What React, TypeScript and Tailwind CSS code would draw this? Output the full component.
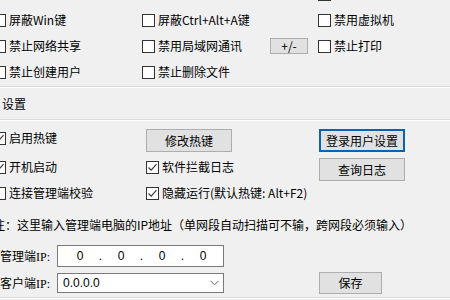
import React from 'react';

function Box({ checked }: { checked?: boolean }) {
  return (
    <span className="w-[13px] h-[13px] shrink-0 border border-[#333333] bg-white flex items-center justify-center">
      {checked && (
        <svg width="11" height="11" viewBox="0 0 11 11">
          <path d="M1.5 5.5 L4.2 8.2 L9.5 2.2" fill="none" stroke="#3a3a3a" strokeWidth="1.2" />
        </svg>
      )}
    </span>
  );
}

function Check({ label, checked, className = '' }: { label: string; checked?: boolean; className?: string }) {
  return (
    <div className={`flex items-center gap-[3px] whitespace-nowrap ${className}`}>
      <Box checked={checked} />
      <span className="leading-none">{label}</span>
    </div>
  );
}

function Btn({ label, className = '', focused }: { label: string; className?: string; focused?: boolean }) {
  return (
    <div
      className={`flex items-center justify-center bg-[#e1e1e1] leading-none ${
        focused ? 'border-2 border-[#0a64ad]' : 'border border-[#adadad]'
      } ${className}`}
    >
      {label}
    </div>
  );
}

function Line() {
  return (
    <div>
      <div className="h-px bg-[#dadada]" />
      <div className="h-px bg-white" />
    </div>
  );
}

export default function App() {
  return (
    <div className="w-[450px] h-[300px] overflow-hidden bg-[#f0f0f0] text-black text-[12px] [font-family:'Noto_Sans_CJK_SC','Microsoft_YaHei',sans-serif]">
      {/* top options */}
      <div className="-mt-[19px] -ml-[7px] flex">
        <div className="w-[149px] flex flex-col">
          <div className="h-[26px]" />
          <Check label="屏蔽Win键" className="h-[26px]" />
          <Check label="禁止网络共享" className="h-[26px]" />
          <Check label="禁止创建用户" className="h-[26px]" />
        </div>
        <div className="w-[176px] flex flex-col">
          <div className="h-[26px]" />
          <Check label="屏蔽Ctrl+Alt+A键" className="h-[26px]" />
          <div className="h-[26px] flex items-center">
            <Check label="禁用局域网通讯" className="w-[128px]" />
            <Btn label="+/-" className="w-[38px] h-[16px]" />
          </div>
          <Check label="禁止删除文件" className="h-[26px]" />
        </div>
        <div className="flex flex-col">
          <Check label="禁用" className="h-[26px]" />
          <Check label="禁用虚拟机" className="h-[26px]" />
          <Check label="禁止打印" className="h-[26px]" />
        </div>
      </div>

      <div className="mt-px">
        <Line />
      </div>
      <div className="h-[31px] flex items-center pl-[2px] leading-none">设置</div>
      <Line />

      {/* settings */}
      <div className="-ml-[7px] flex">
        <div className="w-[153px] flex flex-col">
          <Check label="启用热键" checked className="h-[20px] mt-[7px]" />
          <Check label="开机启动" checked className="h-[20px] mt-[9px]" />
          <Check label="连接管理端校验" className="h-[20px] mt-[6px]" />
        </div>
        <div className="w-[173px] flex flex-col">
          <Btn label="修改热键" className="w-[86px] h-[23px] mt-[8px]" />
          <Check label="软件拦截日志" checked className="h-[20px] mt-[5px]" />
          <Check label="隐藏运行(默认热键: Alt+F2)" checked className="h-[20px] mt-[6px]" />
        </div>
        <div className="flex flex-col">
          <Btn label="登录用户设置" focused className="w-[86px] h-[23px] mt-[8px]" />
          <Btn label="查询日志" className="w-[86px] h-[23px] mt-[6px]" />
        </div>
      </div>

      {/* ip settings */}
      <div className="mt-[14px] -ml-[7px] h-[16px] flex items-center whitespace-nowrap leading-none">
        注：这里输入管理端电脑的IP地址（单网段自动扫描可不输，跨网段必须输入）
      </div>
      <div className="mt-[12px] flex items-center">
        <div className="w-[57px] whitespace-nowrap leading-none">
          管理端<span className="[font-family:'Liberation_Serif',serif]">IP:</span>
        </div>
        <div className="w-[167px] h-[22px] bg-white border border-[#7a7a7a] flex items-center pl-[7px] leading-none [font-family:'Liberation_Sans',sans-serif]">
          <span className="w-[30px] text-center">0</span>
          <span className="w-[11px] text-center">.</span>
          <span className="w-[30px] text-center">0</span>
          <span className="w-[11px] text-center">.</span>
          <span className="w-[30px] text-center">0</span>
          <span className="w-[11px] text-center">.</span>
          <span className="w-[30px] text-center">0</span>
        </div>
      </div>
      <div className="mt-[5px] flex items-center">
        <div className="w-[57px] whitespace-nowrap leading-none">
          客户端<span className="[font-family:'Liberation_Serif',serif]">IP:</span>
        </div>
        <div className="w-[167px] h-[20px] bg-white border border-[#7a7a7a] flex items-center justify-between pl-[5px] pr-[4px] leading-none [font-family:'Liberation_Sans',sans-serif]">
          <span>0.0.0.0</span>
          <svg width="9" height="6" viewBox="0 0 9 6">
            <path d="M0.5 0.8 L4.5 4.8 L8.5 0.8" fill="none" stroke="#606060" strokeWidth="1" />
          </svg>
        </div>
        <Btn label="保存" className="ml-[95px] w-[63px] h-[22px]" />
      </div>
      <div className="mt-[3px]">
        <Line />
      </div>
    </div>
  );
}
